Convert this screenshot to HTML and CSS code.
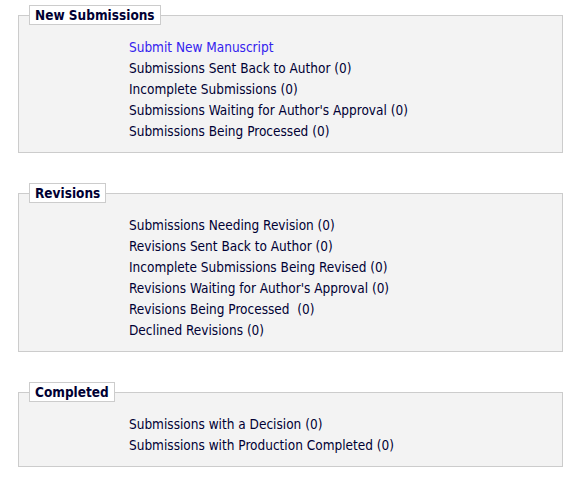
FILE: index.html
```html
<!DOCTYPE html>
<html>
<head>
<meta charset="utf-8">
<link rel="stylesheet" href="styles.css">
</head>
<body>
<div class="page">
  <fieldset class="group">
    <legend class="group-title">New Submissions</legend>
    <ul class="items">
      <li><a class="link" href="#">Submit New Manuscript</a></li>
      <li>Submissions Sent Back to Author (0)</li>
      <li>Incomplete Submissions (0)</li>
      <li>Submissions Waiting for Author's Approval (0)</li>
      <li>Submissions Being Processed (0)</li>
    </ul>
  </fieldset>
  <fieldset class="group">
    <legend class="group-title">Revisions</legend>
    <ul class="items">
      <li>Submissions Needing Revision (0)</li>
      <li>Revisions Sent Back to Author (0)</li>
      <li>Incomplete Submissions Being Revised (0)</li>
      <li>Revisions Waiting for Author's Approval (0)</li>
      <li>Revisions Being Processed &nbsp;(0)</li>
      <li>Declined Revisions (0)</li>
    </ul>
  </fieldset>
  <fieldset class="group">
    <legend class="group-title">Completed</legend>
    <ul class="items">
      <li>Submissions with a Decision (0)</li>
      <li>Submissions with Production Completed (0)</li>
    </ul>
  </fieldset>
</div>
</body>
</html>
```
FILE: styles.css
```css
html, body {
  margin: 0;
  padding: 0;
  background: #ffffff;
}
body {
  font-family: "DejaVu Sans Condensed", "DejaVu Sans", sans-serif;
  font-stretch: condensed;
  font-size: 13.5px;
  color: #000033;
}
.page {
  padding: 5px 25px 0 18px;
}
.group {
  margin: 0 0 30px 0;
  padding: 12px 10px 10px 10px;
  border: 1px solid #cccccc;
  background: #f3f3f3;
  min-width: 0;
}
.group-title {
  padding: 0 5px;
  border: 1px solid #cccccc;
  background: #ffffff;
  font-weight: bold;
  font-size: 13.5px;
  line-height: 18px;
  color: #000033;
}
.items {
  list-style: none;
  margin: 0;
  padding: 0 0 0 100px;
}
.items li {
  line-height: 21px;
  white-space: nowrap;
}
.link {
  color: #3322ee;
  text-decoration: none;
}
```
